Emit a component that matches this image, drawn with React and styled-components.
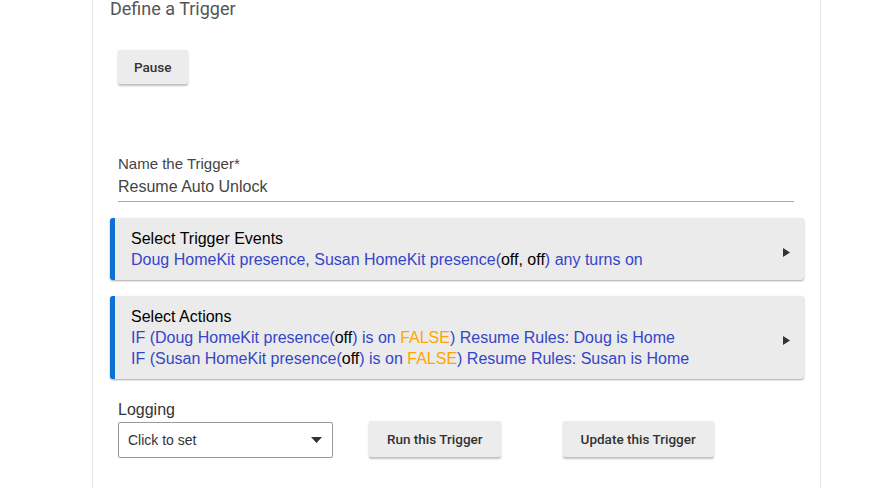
import React from 'react';
import styled, { createGlobalStyle } from 'styled-components';

const GlobalStyle = createGlobalStyle`
  html, body {
    margin: 0;
    padding: 0;
    background: #fff;
    overflow: hidden;
  }
  body {
    font-family: "Liberation Sans", Arial, sans-serif;
  }
`;

const Page = styled.div`
  width: 879px;
  height: 488px;
  overflow: hidden;
`;

const Card = styled.div`
  margin-left: 92px;
  width: 694px;
  min-height: 488px;
  padding: 0 16px 0 17px;
  border-left: 1px solid #e6e6e6;
  border-right: 1px solid #e6e6e6;
  background: #fff;
`;

const Title = styled.h2`
  margin: 0;
  font-family: Roboto, sans-serif;
  font-weight: 400;
  font-size: 18px;
  line-height: 18px;
  color: #555;
`;

const Button = styled.button`
  height: ${(p) => p.$h || 36}px;
  padding: 0 ${(p) => p.$pad || 18}px;
  border: none;
  border-radius: 2px;
  background: #ececec;
  box-shadow: 0 2px 2px rgba(0, 0, 0, 0.24), 0 0 1px rgba(0, 0, 0, 0.1);
  font-family: Roboto, sans-serif;
  font-weight: 500;
  font-size: 13.5px;
  color: #333;
  cursor: pointer;
`;

const PauseRow = styled.div`
  margin-top: 32px;
  padding-left: 8px;
`;

const Field = styled.div`
  margin: 70px 10px 0 8px;
  padding-bottom: 4px;
  border-bottom: 1px solid #aaa;
`;

const FieldLabel = styled.div`
  font-size: 15px;
  line-height: 20px;
  color: #444;
`;

const FieldValue = styled.div`
  margin-top: 3px;
  font-size: 16px;
  line-height: 20px;
  color: #444;
`;

const Panel = styled.div`
  display: flex;
  align-items: center;
  margin-top: 16px;
  padding: 10px 14px 10px 16px;
  border-left: 5px solid #0b6fd4;
  border-radius: 3px;
  background: #ebebeb;
  box-shadow: 0 1px 2px rgba(0, 0, 0, 0.35);
`;

const PanelBody = styled.div`
  flex: 1;
  font-size: 16px;
  line-height: 21px;
`;

const PanelTitle = styled.div`
  color: #000;
`;

const Line = styled.div`
  color: #3545c9;
`;

const Plain = styled.span`
  color: #000;
`;

const Warn = styled.span`
  color: #ffa500;
`;

const Arrow = styled.svg`
  width: 7px;
  height: 9px;
  margin-top: ${(p) => p.$offset || 0}px;
  fill: #333;
`;

const BottomRow = styled.div`
  display: flex;
  align-items: flex-end;
  margin-top: 21px;
  padding-left: 8px;
`;

const SelectGroup = styled.div`
  display: flex;
  flex-direction: column;
  gap: 2px;
`;

const SelectLabel = styled.div`
  font-size: 16px;
  line-height: 20px;
  color: #333;
`;

const SelectBox = styled.div`
  display: flex;
  align-items: center;
  justify-content: space-between;
  box-sizing: border-box;
  width: 215px;
  height: 36px;
  padding: 0 10px 0 9px;
  border: 1px solid #999;
  border-radius: 2px;
  font-size: 14px;
  color: #333;
`;

const Caret = styled.svg`
  width: 11px;
  height: 6px;
  fill: #333;
`;

const ActionButton = styled(Button)`
  margin-left: ${(p) => p.$gap}px;
  margin-bottom: 1px;
`;

const PanelArrow = ({ offset }) => (
  <Arrow viewBox="0 0 7 9" $offset={offset}>
    <path d="M0 0 L7 4.5 L0 9 Z" />
  </Arrow>
);

export default function App() {
  return (
    <Page>
      <GlobalStyle />
      <Card>
        <Title>Define a Trigger</Title>
        <PauseRow>
          <Button $h={34} $pad={16}>Pause</Button>
        </PauseRow>

        <Field>
          <FieldLabel>Name the Trigger*</FieldLabel>
          <FieldValue>Resume Auto Unlock</FieldValue>
        </Field>

        <Panel>
          <PanelBody>
            <PanelTitle>Select Trigger Events</PanelTitle>
            <Line>
              Doug HomeKit presence, Susan HomeKit presence(<Plain>off, off</Plain>) any turns on
            </Line>
          </PanelBody>
          <PanelArrow offset={6} />
        </Panel>

        <Panel>
          <PanelBody>
            <PanelTitle>Select Actions</PanelTitle>
            <Line>
              IF (Doug HomeKit presence(<Plain>off</Plain>) is on <Warn>FALSE</Warn>) Resume Rules: Doug is Home
            </Line>
            <Line>
              IF (Susan HomeKit presence(<Plain>off</Plain>) is on <Warn>FALSE</Warn>) Resume Rules: Susan is Home
            </Line>
          </PanelBody>
          <PanelArrow offset={5} />
        </Panel>

        <BottomRow>
          <SelectGroup>
            <SelectLabel>Logging</SelectLabel>
            <SelectBox>
              Click to set
              <Caret viewBox="0 0 11 6">
                <path d="M0 0 L11 0 L5.5 6 Z" />
              </Caret>
            </SelectBox>
          </SelectGroup>
          <ActionButton $gap={36}>Run this Trigger</ActionButton>
          <ActionButton $gap={62}>Update this Trigger</ActionButton>
        </BottomRow>
      </Card>
    </Page>
  );
}
